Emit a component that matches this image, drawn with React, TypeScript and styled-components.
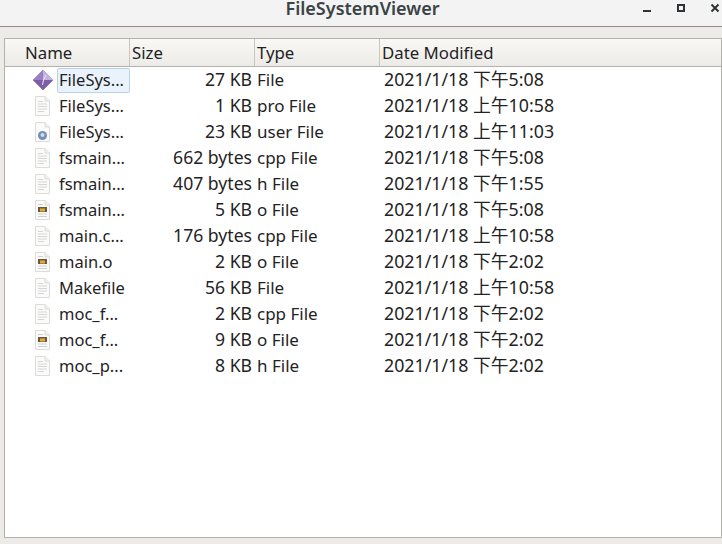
import styled, { createGlobalStyle } from 'styled-components';

const GlobalStyle = createGlobalStyle`
  html, body {
    margin: 0;
    padding: 0;
    height: 100%;
    overflow: hidden;
  }
  #root {
    height: 100%;
  }
`;

const Window = styled.div`
  display: flex;
  flex-direction: column;
  width: 722px;
  height: 544px;
  background: #edebe7;
  font-family: 'Noto Sans', 'Noto Sans CJK SC', sans-serif;
  font-size: 17px;
  color: #1f2324;
`;

const TitleBar = styled.div`
  position: relative;
  flex: 0 0 26px;
  padding-left: 3px;
  background: #f3f3f3;
  border-bottom: 1px solid #8f8f8b;
  text-align: center;
`;

const Title = styled.div`
  font-size: 18px;
  line-height: 17px;
  font-weight: 600;
  color: #3b4346;
`;

const WindowButton = styled.svg<{ $x: number }>`
  position: absolute;
  top: 3px;
  left: ${props => props.$x}px;
  width: 12px;
  height: 12px;
`;

const Frame = styled.div`
  display: flex;
  flex-direction: column;
  flex: 1;
  margin: 11px 0 6px 4px;
  background: #fff;
  border: 1px solid #b5b1ab;
  overflow: hidden;
`;

const Grid = styled.div`
  display: grid;
  grid-template-columns: 125px 125px 125px 1fr;
`;

const HeaderRow = styled(Grid)`
  height: 27px;
  font-size: 16.8px;
  background: linear-gradient(#faf8f5, #edebe7);
  border-bottom: 1px solid #b5b1ab;
`;

const HeaderCell = styled.div<{ $pad: number }>`
  padding-left: ${props => props.$pad}px;
  line-height: 27px;
  border-right: 1px solid #c9c5bf;

  &:last-child {
    border-right: none;
  }
`;

const Row = styled(Grid)`
  height: 26px;
  line-height: 26px;
`;

const NameCell = styled.div`
  display: flex;
  align-items: center;
  padding-left: 26px;
`;

const IconSlot = styled.svg`
  flex: 0 0 22px;
  width: 22px;
  height: 22px;
  margin-right: 4px;
`;

const NameText = styled.div<{ $selected?: boolean }>`
  box-sizing: border-box;
  width: 73px;
  height: 25px;
  line-height: 22px;
  padding-left: 1px;
  font-size: 16.5px;
  white-space: nowrap;
  border: 1px solid ${props => (props.$selected ? '#b9d3e8' : 'transparent')};
  background: ${props => (props.$selected ? '#eaf3fb' : 'transparent')};
  border-radius: 2px;
`;

const SizeCell = styled.div`
  text-align: right;
  padding-right: 3px;
  font-size: 17.6px;
  line-height: 25px;
`;

const TypeCell = styled.div`
  padding-left: 2px;
`;

const DateCell = styled.div`
  padding-left: 4px;
  font-size: 17.8px;
  line-height: 25px;
  white-space: nowrap;
`;

type IconKind = 'app' | 'text' | 'user' | 'object';

interface FileEntry {
  name: string;
  size: string;
  type: string;
  date: string;
  icon: IconKind;
}

const files: FileEntry[] = [
  { name: 'FileSys...', size: '27 KB', type: 'File', date: '2021/1/18 下午5:08', icon: 'app' },
  { name: 'FileSys...', size: '1 KB', type: 'pro File', date: '2021/1/18 上午10:58', icon: 'text' },
  { name: 'FileSys...', size: '23 KB', type: 'user File', date: '2021/1/18 上午11:03', icon: 'user' },
  { name: 'fsmain...', size: '662 bytes', type: 'cpp File', date: '2021/1/18 下午5:08', icon: 'text' },
  { name: 'fsmain...', size: '407 bytes', type: 'h File', date: '2021/1/18 下午1:55', icon: 'text' },
  { name: 'fsmain...', size: '5 KB', type: 'o File', date: '2021/1/18 下午5:08', icon: 'object' },
  { name: 'main.c...', size: '176 bytes', type: 'cpp File', date: '2021/1/18 上午10:58', icon: 'text' },
  { name: 'main.o', size: '2 KB', type: 'o File', date: '2021/1/18 下午2:02', icon: 'object' },
  { name: 'Makefile', size: '56 KB', type: 'File', date: '2021/1/18 上午10:58', icon: 'text' },
  { name: 'moc_f...', size: '2 KB', type: 'cpp File', date: '2021/1/18 下午2:02', icon: 'text' },
  { name: 'moc_f...', size: '9 KB', type: 'o File', date: '2021/1/18 下午2:02', icon: 'object' },
  { name: 'moc_p...', size: '8 KB', type: 'h File', date: '2021/1/18 下午2:02', icon: 'text' },
];

function FileIcon({ kind }: { kind: IconKind }) {
  if (kind === 'app') {
    return (
      <IconSlot viewBox="0 0 22 22">
        <path d="M12 1 L22 11 L12 21 L2 11 Z" fill="#a68fc9" stroke="#8d8d96" strokeWidth="0.6" />
        <path d="M12 1 L22 11 L12 11 Z" fill="#c3b3de" />
        <path d="M2 11 L12 1 L12 11 Z" fill="#9a80c4" />
        <path d="M2 11 L12 21 L22 11 Z" fill="#7c5da8" />
        <path d="M15 6 L12.5 11 L11.5 16" stroke="#ece6f5" strokeWidth="1" fill="none" />
      </IconSlot>
    );
  }
  return (
    <IconSlot viewBox="0 0 22 22">
      <path d="M4.5 1.5 H14 L18.5 6 V20.5 H4.5 Z" fill="#fbfbfb" stroke="#dcdcd8" />
      <path d="M14 1.5 V6 H18.5" fill="#efefed" stroke="#dcdcd8" />
      {kind === 'text' && (
        <path
          d="M7 6.5 H12 M7 9 H16 M7 11.5 H16 M7 14 H16 M7 16.5 H13"
          stroke="#d6d6d4"
          strokeWidth="1"
        />
      )}
      {kind === 'user' && (
        <>
          <circle cx="11.5" cy="14.5" r="4.5" fill="#7290b4" />
          <circle cx="11.5" cy="14" r="2" fill="#cfdcec" />
        </>
      )}
      {kind === 'object' && (
        <>
          <path d="M7 5.5 H12 M7 15 H16 M7 17.5 H16" stroke="#cfcfcc" strokeWidth="1" />
          <rect x="7" y="8" width="9" height="5" fill="#6b5a3a" />
          <rect x="9" y="9.5" width="5" height="3" fill="#e3a83a" />
        </>
      )}
    </IconSlot>
  );
}

export default function App() {
  return (
    <Window>
      <GlobalStyle />
      <TitleBar>
        <Title>FileSystemViewer</Title>
        <WindowButton $x={642} viewBox="0 0 12 12">
          <rect x="1" y="7" width="8" height="2" fill="#2e3436" />
        </WindowButton>
        <WindowButton $x={676} viewBox="0 0 12 12">
          <path d="M2 2 H8 V8 H2 Z" fill="none" stroke="#2e3436" strokeWidth="2" />
        </WindowButton>
        <WindowButton $x={710} viewBox="0 0 12 12">
          <path d="M1.5 1.5 L8.5 8.5 M8.5 1.5 L1.5 8.5" stroke="#2e3436" strokeWidth="2" />
        </WindowButton>
      </TitleBar>
      <Frame>
        <HeaderRow>
          <HeaderCell $pad={20}>Name</HeaderCell>
          <HeaderCell $pad={2}>Size</HeaderCell>
          <HeaderCell $pad={2}>Type</HeaderCell>
          <HeaderCell $pad={2}>Date Modified</HeaderCell>
        </HeaderRow>
        {files.map((file, i) => (
          <Row key={i}>
            <NameCell>
              <FileIcon kind={file.icon} />
              <NameText $selected={i === 0}>{file.name}</NameText>
            </NameCell>
            <SizeCell>{file.size}</SizeCell>
            <TypeCell>{file.type}</TypeCell>
            <DateCell>{file.date}</DateCell>
          </Row>
        ))}
      </Frame>
    </Window>
  );
}
